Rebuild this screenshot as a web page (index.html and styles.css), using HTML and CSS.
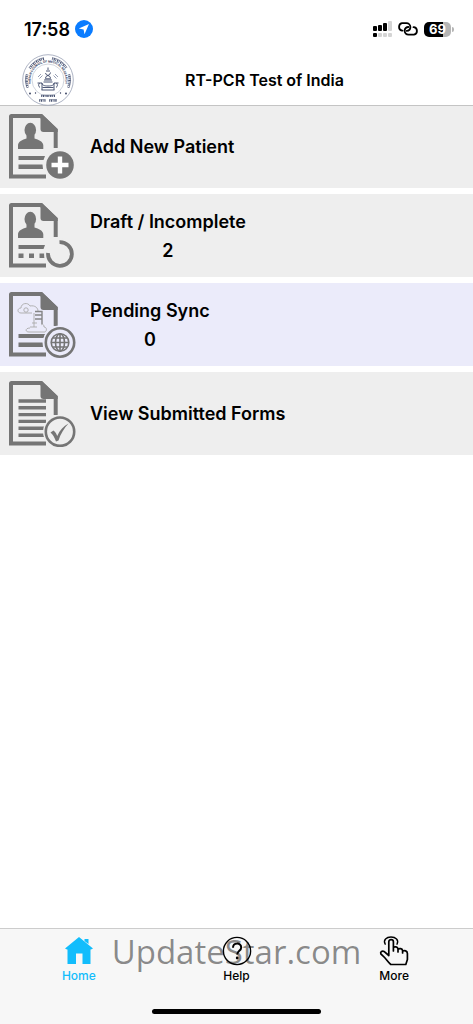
FILE: index.html
```html
<!DOCTYPE html>
<html lang="en">
<head>
    <meta charset="UTF-8">
    <meta name="viewport" content="width=device-width, initial-scale=1.0">
    <title>RT-PCR Test of India</title>
    <link rel="stylesheet" href="styles.css">
</head>
<body>
    <div class="status-bar">
        <span class="clock">17:58</span>
        <svg class="location" viewBox="0 0 18 18" width="18" height="18">
            <circle cx="9" cy="9" r="9" fill="#0a7cff"/>
            <path d="M14 4 L3.8 8.6 L8.6 9.4 L9.5 14.2 Z" fill="#fff"/>
        </svg>
        <div class="status-icons">
            <svg viewBox="0 0 19 16" width="19" height="16">
                <g fill="#000">
                    <rect x="0" y="5" width="4" height="5" rx="1"/>
                    <rect x="5" y="4" width="4" height="6" rx="1"/>
                    <rect x="10" y="2" width="4" height="8" rx="1"/>
                    <rect x="0" y="12" width="4" height="4" rx="1"/>
                </g>
                <g fill="#d4d4d4">
                    <rect x="15" y="0" width="4" height="10" rx="1"/>
                    <rect x="5" y="12" width="4" height="4" rx="1"/>
                    <rect x="10" y="12" width="4" height="4" rx="1"/>
                    <rect x="15" y="12" width="4" height="4" rx="1"/>
                </g>
            </svg>
            <svg viewBox="0 0 22 14" width="22" height="14" fill="none" stroke="#000" stroke-width="1.8" stroke-linecap="round">
                <path d="M5.5 8.6 H5 A3.8 3.8 0 0 1 5 1.2 H9.5 A3.9 3.9 0 0 1 13.4 5 C13.4 7.4 11.6 8.8 9.6 8.8"/>
                <path d="M16.5 5.2 H17 A3.8 3.8 0 0 1 17 12.6 H11.5 A3.8 3.8 0 0 1 7.6 8.8 C7.6 6.4 9.4 5 11.4 5"/>
            </svg>
            <div class="battery">69</div>
        </div>
    </div>

    <header class="header">
        <svg class="logo" viewBox="0 0 52 52" width="52" height="52">
            <defs>
                <path id="innerRing" d="M12.6 37.2 A17.5 17.5 0 1 1 39.4 37.2"/>
            </defs>
            <circle cx="26" cy="26" r="25.3" fill="#fff" stroke="#8b93aa" stroke-width="0.7"/>
            <circle cx="26" cy="26" r="16" fill="none" stroke="#a3aabd" stroke-width="0.5"/>
            <!-- script lettering of the outer ring -->
            <g fill="none" stroke="#4a5473">
                <path d="M6 33.5 A21.5 21.5 0 0 1 5.2 20.5 M8 14.5 A21.5 21.5 0 0 1 22 4.9 M30 4.9 A21.5 21.5 0 0 1 43.8 14 M46.8 20.5 A21.5 21.5 0 0 1 46 33.5" stroke-width="2.4" stroke-dasharray="0.7 1 1.2 0.7"/>
                <path d="M4.7 33.5 A22.8 22.8 0 0 1 4 20.5 M7 13.6 A22.8 22.8 0 0 1 22 3.6 M30 3.6 A22.8 22.8 0 0 1 45 13.3 M48 20.5 A22.8 22.8 0 0 1 47.3 33.5" stroke-width="0.6"/>
                <path d="M19 42 H33 M17 46.6 H23.5 M27 46.6 H35" stroke-width="2.2" stroke-dasharray="0.8 0.9 1.3 0.7"/>
                <path d="M19 41 H33 M17 45.6 H23.5 M27 45.6 H35" stroke-width="0.5"/>
            </g>
            <text class="seal-text"><textPath href="#innerRing" startOffset="50%">INDIAN COUNCIL OF MEDICAL RESEARCH</textPath></text>
            <g fill="#2c3658">
                <circle cx="8" cy="39.5" r="0.9"/>
                <circle cx="44" cy="39.5" r="0.9"/>
                <circle cx="13.5" cy="39" r="0.7"/>
                <circle cx="38.5" cy="39" r="0.7"/>
            </g>
            <g fill="none" stroke="#3a4566" stroke-width="0.9">
                <path d="M26 13.5 V16 M24 17 H28 M23.5 19 C23.5 22 28.5 21 28.5 24 M28.5 18.5 C28.5 22 23.5 21 23.5 24 M22 26 H30 M23 24.8 H29"/>
                <path d="M15.5 29 H20 C20 31 22 32 26 32 C30 32 32 31 32 29 H36.5 M17.5 29 C16 31 16.5 32.5 18 33.5 M34.5 29 C36 31 35.5 32.5 34 33.5 M19.5 36 H32.5 M20.5 33.5 H31.5 M20 29 V36 M32 29 V36 M21.5 28 H30.5"/>
                <path d="M16 23 L19 20 M17.5 24.5 L20.5 21.5 M36 23 L33 20 M34.5 24.5 L31.5 21.5" stroke="#8b93aa"/>
            </g>
        </svg>
        <h1 class="title">RT-PCR Test of India</h1>
    </header>

    <main class="menu">
        <button class="menu-item" type="button">
            <svg class="menu-icon" viewBox="0 0 68 67" width="68" height="67">
                <path class="sheet" d="M47.7 35 V17 L33 3 H3.5 Q3 3 3 3.5 V63.5 H38"/>
                <path class="ink" d="M32.5 1 H34 L49.7 16 V19 H35.5 Q32.5 19 32.5 16 Z"/>
                <ellipse class="ink" cx="22.3" cy="17" rx="5.8" ry="7.2"/>
                <path class="ink" d="M10 36 V32.5 C10 28.5 14.5 26.8 18.5 25.5 V22 H26.5 V25.5 C30.5 26.8 35.3 28.5 35.3 32.5 V36 Z"/>
                <path class="ink" d="M10.5 43 H37 L35.5 47 H10.5 Z M10.5 51.5 H34.5 L35 56 H10.5 Z"/>
                <circle class="gap" cx="52" cy="52" r="16"/>
                <circle class="ink" cx="52" cy="52" r="13.8"/>
                <path d="M52 43.5 V60.5 M43.5 52 H60.5" stroke="#fff" stroke-width="4.4"/>
            </svg>
            <span class="menu-text">
                <span>Add New Patient</span>
            </span>
        </button>

        <button class="menu-item" type="button">
            <svg class="menu-icon" viewBox="0 0 68 67" width="68" height="67">
                <path class="sheet" d="M47.7 35 V17 L33 3 H3.5 Q3 3 3 3.5 V63.5 H38"/>
                <path class="ink" d="M32.5 1 H34 L49.7 16 V19 H35.5 Q32.5 19 32.5 16 Z"/>
                <ellipse class="ink" cx="22.3" cy="17" rx="5.8" ry="7.2"/>
                <path class="ink" d="M10 36 V32.5 C10 28.5 14.5 26.8 18.5 25.5 V22 H26.5 V25.5 C30.5 26.8 35.3 28.5 35.3 32.5 V36 Z"/>
                <path class="ink" d="M10.5 43 H37 L35.5 47 H10.5 Z M10.5 51.5 h5 v4.5 h-5 Z M21 51.5 h5 v4.5 h-5 Z M31.5 51.5 h5 v4.5 h-5 Z"/>
                <circle class="gap" cx="52" cy="52" r="15.8"/>
                <path d="M51.5 40.1 A11.9 11.9 0 1 1 40.1 51" fill="none" stroke="#757575" stroke-width="3.8"/>
            </svg>
            <span class="menu-text">
                <span>Draft / Incomplete</span>
                <span>2</span>
            </span>
        </button>

        <button class="menu-item selected" type="button">
            <svg class="menu-icon" viewBox="0 0 68 67" width="68" height="67">
                <path class="sheet" d="M47.7 35 V17 L33 3 H3.5 Q3 3 3 3.5 V63.5 H38"/>
                <path class="ink" d="M32.5 1 H34 L49.7 16 V19 H35.5 Q32.5 19 32.5 16 Z"/>
                <g fill="none" stroke="#aaa" stroke-width="0.9">
                    <path d="M24 22 H13 C9 22 9 17 13 17 C13 12 20 11 22 15 C27 14 30 17 30 20"/>
                    <circle cx="18" cy="19" r="2.2"/>
                    <path d="M22 37 C17 37 17 41 21 41 H37 C39 40 39 36 36 36 C36 33 34 33 33 34 M26 36 V22 M29 36 H22 M29 32 H24"/>
                </g>
                <path d="M27 20.5 H34.5 M27 24 H34.5 M27 28 H34.5 M34 20 V33" fill="none" stroke="#858585" stroke-width="1.4"/>
                <path class="ink" d="M10.5 43 H37 L35.5 47 H10.5 Z M10.5 51.5 H34.5 L35 56 H10.5 Z"/>
                <circle class="gap" cx="52" cy="51.5" r="17"/>
                <circle class="gap ring" cx="52" cy="51.5" r="14.2"/>
                <g fill="none" stroke="#757575" stroke-width="1.6">
                    <circle cx="52" cy="51.5" r="8.8"/>
                    <ellipse cx="52" cy="51.5" rx="4.5" ry="8.8"/>
                    <path d="M52 42.7 V60.3 M43.2 51.5 H60.8 M44.8 47 H59.2 M44.8 56 H59.2"/>
                </g>
            </svg>
            <span class="menu-text">
                <span>Pending Sync</span>
                <span>0</span>
            </span>
        </button>

        <button class="menu-item" type="button">
            <svg class="menu-icon" viewBox="0 0 68 67" width="68" height="67">
                <path class="sheet" d="M47.7 35 V17 L33 3 H3.5 Q3 3 3 3.5 V63.5 H38"/>
                <path class="ink" d="M32.5 1 H34 L49.7 16 V19 H35.5 Q32.5 19 32.5 16 Z"/>
                <path d="M10.5 21 H38 M10.5 27.8 H38 M10.5 34.6 H38 M10.5 41.4 H38 M10.5 48.3 H36 M10.5 55.3 H36" fill="none" stroke="#757575" stroke-width="3.4"/>
                <circle class="gap" cx="52" cy="51.7" r="17"/>
                <circle class="gap ring" cx="52" cy="51.7" r="14.2"/>
                <path class="ink" d="M42.5 52.5 L45.5 50.5 C47.5 52 48.5 54 49.2 56 C52 50 55.5 46 60.5 43.5 C56 48.5 52.5 54 50.5 60.5 L48 61.5 C46.5 57.5 45 54.5 42.5 52.5 Z"/>
            </svg>
            <span class="menu-text">
                <span>View Submitted Forms</span>
            </span>
        </button>
    </main>

    <footer class="footer">
        <nav class="tabs">
            <a class="tab active" href="#home">
                <svg viewBox="0 0 30 30" width="30" height="30">
                    <path d="M15 1 L29 12.5 L27 13.5 H26.5 V28 H18.5 V17.5 H12 V28 H3.5 V13.5 H3 L1 12.5 Z M20.5 3 H24.5 V8 L20.5 5 Z" fill="currentColor"/>
                </svg>
                <span>Home</span>
            </a>
            <a class="tab" href="#help">
                <svg viewBox="0 0 30 30" width="30" height="30" fill="none" stroke="currentColor">
                    <circle cx="15" cy="15" r="13.6" stroke-width="1.4"/>
                    <path d="M11 11.8 C11 6.2 19.2 6.4 19.2 11.4 C19.2 14.8 15.2 14.6 15.2 18.6" stroke-width="2"/>
                    <circle cx="15.2" cy="22" r="1.4" fill="currentColor" stroke="none"/>
                </svg>
                <span>Help</span>
            </a>
            <a class="tab" href="#more">
                <svg viewBox="0 0 30 30" width="30" height="30" fill="none" stroke="currentColor" stroke-width="1.7" stroke-linejoin="round" stroke-linecap="round">
                    <path d="M9.8 19.5 V5.8 C9.8 2.8 14.4 2.8 14.4 5.8 V15 V11.5 C15.5 10.4 18.8 10.6 19 12.8 V16 V13.2 C20.4 12.2 23.2 12.4 23.6 14.5 V17 V15 C25.4 14 28.4 14.8 28.4 17.5 V23.5 L26.8 28.5 H11.8 C8.8 26 7 22.5 4.2 20.2 L1.8 17.8 C1 15.8 3.4 14.6 5 15.4 L9.8 19.5"/>
                    <path d="M6.2 8.2 C3.8 3.8 7.6 1 12 1 C16.6 1 20.2 3.8 18 8.2" stroke-width="1.4"/>
                </svg>
                <span>More</span>
            </a>
        </nav>
        <div class="watermark">UpdateStar.com</div>
        <div class="home-indicator"></div>
    </footer>
</body>
</html>
```
FILE: styles.css
```css
* {
    box-sizing: border-box;
}
body {
    font-family: Inter, "Liberation Sans", sans-serif;
    margin: 0;
    min-height: 100vh;
    display: flex;
    flex-direction: column;
    background: #fff;
    color: #000;
}
.status-bar {
    display: flex;
    align-items: center;
    height: 54px;
    padding: 4px 20px 0 24px;
}
.clock {
    font-size: 18px;
    font-weight: 600;
}
.location {
    margin-left: 5px;
}
.status-icons {
    display: flex;
    align-items: center;
    gap: 5px;
    margin-left: auto;
}
.battery {
    position: relative;
    width: 27px;
    height: 15px;
    margin-right: 2px;
    border-radius: 5px;
    background: linear-gradient(to right, #000 69%, #b5b5b5 69%);
    color: #fff;
    font-size: 13px;
    font-weight: 700;
    line-height: 15px;
    text-align: center;
}
.battery::after {
    content: "";
    position: absolute;
    right: -3px;
    top: 5px;
    width: 2px;
    height: 5px;
    border-radius: 0 2px 2px 0;
    background: #b5b5b5;
}
.header {
    position: relative;
    display: grid;
    grid-template-columns: 52px 1fr;
    align-items: center;
    height: 51px;
    padding: 0 18px 0 22px;
    box-shadow: 0 1px 0 #c4c4c4;
}
.title {
    margin: 0;
    font-size: 16px;
    font-weight: 600;
    line-height: 20px;
    text-align: center;
}
.seal-text {
    font-size: 3px;
    font-weight: 700;
    text-anchor: middle;
    fill: #2c3658;
}
.menu {
    flex: 1;
    display: flex;
    flex-direction: column;
    gap: 6px;
}
.menu-item {
    --row-color: #eee;
    display: flex;
    align-items: center;
    gap: 14px;
    width: 100%;
    height: 83px;
    padding: 0 8px;
    border: none;
    background: var(--row-color);
    color: #000;
    font-family: inherit;
    font-size: 18px;
    font-weight: 600;
    line-height: 29px;
    cursor: pointer;
}
.menu-item.selected {
    --row-color: #ebebfa;
}
.menu-text {
    display: flex;
    flex-direction: column;
    align-items: center;
}
.sheet {
    fill: none;
    stroke: #757575;
    stroke-width: 4px;
}
.ink {
    fill: #757575;
}
.gap {
    fill: var(--row-color);
}
.ring {
    stroke: #757575;
    stroke-width: 2.6px;
}
.footer {
    position: relative;
    display: flex;
    flex-direction: column;
    align-items: center;
    justify-content: space-between;
    height: 96px;
    padding: 7px 0 10px;
    border-top: 1px solid #ccc;
    background: #f7f7f7;
}
.tabs {
    display: flex;
    width: 100%;
}
.tab {
    flex: 1;
    display: flex;
    flex-direction: column;
    align-items: center;
    gap: 2px;
    color: #000;
    font-size: 12px;
    font-weight: 500;
    line-height: 16px;
    text-decoration: none;
}
.tab.active {
    color: #12bdfc;
}
/* sits over the tab icons */
.watermark {
    position: absolute;
    top: 0;
    left: 0;
    right: 0;
    color: rgba(0, 0, 0, 0.45);
    font-family: "Open Sans", "Noto Sans", sans-serif;
    font-size: 33px;
    line-height: 46px;
    text-align: center;
    pointer-events: none;
}
.home-indicator {
    width: 169px;
    height: 5px;
    border-radius: 3px;
    background: #000;
}
```
